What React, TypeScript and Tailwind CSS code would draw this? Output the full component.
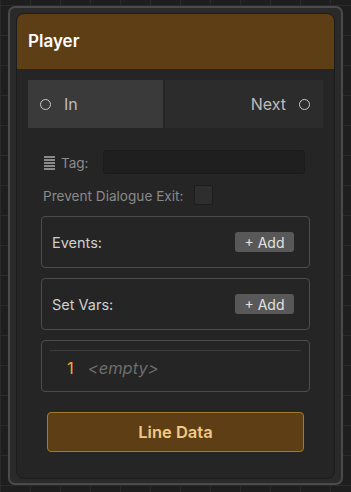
import React from "react"

const Port = ({ side }: { side: "left" | "right" }) => (
  <span
    className={`block h-[11px] w-[11px] rounded-full border-[1.5px] border-[#c8c8c8] ${
      side === "left" ? "mr-[13px]" : "ml-[13px]"
    }`}
  />
)

const AddButton = () => (
  <button className="flex h-[20px] w-[59px] items-center justify-center rounded-[3px] bg-[#585858] text-[14px] text-[#e2e2e2]">
    + Add
  </button>
)

const Section = ({ label }: { label: string }) => (
  <div className="flex h-[52px] items-center justify-between rounded-[4px] border border-[#4d4d4d] pl-[10px] pr-[15px]">
    <span className="text-[14.5px] text-[#d0d0d0]">{label}</span>
    <AddButton />
  </div>
)

export default function App() {
  return (
    <div
      className="h-[492px] w-[351px] overflow-hidden bg-[#1e1e1e] bg-[linear-gradient(#2a2a2a_1px,transparent_1px),linear-gradient(90deg,#2a2a2a_1px,transparent_1px)] bg-[size:30px_30px] bg-[position:0px_5px] pl-[8px] pt-[6px]"
      style={{ fontFamily: "Inter, 'Noto Sans', sans-serif" }}
    >
      <div className="h-[479px] w-[335px] rounded-[7px] border-2 border-[#4a4a4a] bg-[#2a2a2a] px-[6px] pt-[5px]">
        <div className="flex h-[466px] w-[319px] flex-col overflow-hidden rounded-[8px] border border-[#1c1c1c] bg-[#252525]">
          <div className="flex h-[55px] items-center bg-[#5d3e15] pl-[11px] text-[17px] font-semibold text-white">
            Player
          </div>

          <div className="mx-[11px] mt-[11px] flex h-[48px]">
            <div className="flex w-[135px] items-center bg-[#3a3a3a] pl-[12px] text-[16px] text-[#bcbcbc]">
              <Port side="left" />
              In
            </div>
            <div className="ml-[2px] flex flex-1 items-center justify-end bg-[#2c2c2c] pr-[13px] text-[16px] text-[#bcbcbc]">
              Next
              <Port side="right" />
            </div>
          </div>

          <div className="mt-[22px] flex items-center pl-[27px] pr-[29px]">
            <span className="flex w-[11px] flex-col gap-[1px] pt-[2px]">
              <span className="block h-[2px] bg-[#8a8a8a]" />
              <span className="block h-[2px] bg-[#8a8a8a]" />
              <span className="block h-[2px] bg-[#8a8a8a]" />
              <span className="block h-[2px] bg-[#8a8a8a]" />
              <span className="block h-[2px] bg-[#8a8a8a]" />
            </span>
            <span className="ml-[6px] pt-[2px] text-[13.5px] text-[#8c8c8c]">Tag:</span>
            <div className="ml-auto h-[24px] w-[202px] rounded-[3px] border border-[#1b1b1b] bg-[#1f1f1f]" />
          </div>

          <div className="mt-[10px] flex items-center pl-[26px]">
            <span className="pt-[2px] text-[13.6px] text-[#8a8a8a]">Prevent Dialogue Exit:</span>
            <span className="ml-[11px] block h-[20px] w-[19px] rounded-[2px] border border-[#1c1c1c] bg-[#2e2e2e]" />
          </div>

          <div className="mx-[24px] mt-[10px] flex flex-col gap-[10px]">
            <Section label="Events:" />
            <Section label="Set Vars:" />
            <div className="h-[52px] rounded-[4px] border border-[#4d4d4d] px-[8px] pt-[9px]">
              <div className="h-px bg-[#3c3c3c]" />
              <div className="mt-[5px] flex items-center pl-[17px] text-[16.5px]">
                <span className="text-[#e9a83a]">1</span>
                <span className="ml-[14px] italic text-[#6e6e6e]">&lt;empty&gt;</span>
              </div>
            </div>
          </div>

          <button className="mx-[30px] mt-[20px] flex h-[40px] items-center justify-center rounded-[4px] border border-[#a5782f] bg-[#5d3e15] text-[16.5px] font-semibold text-[#f1c985]">
            Line Data
          </button>
        </div>
      </div>
    </div>
  )
}
